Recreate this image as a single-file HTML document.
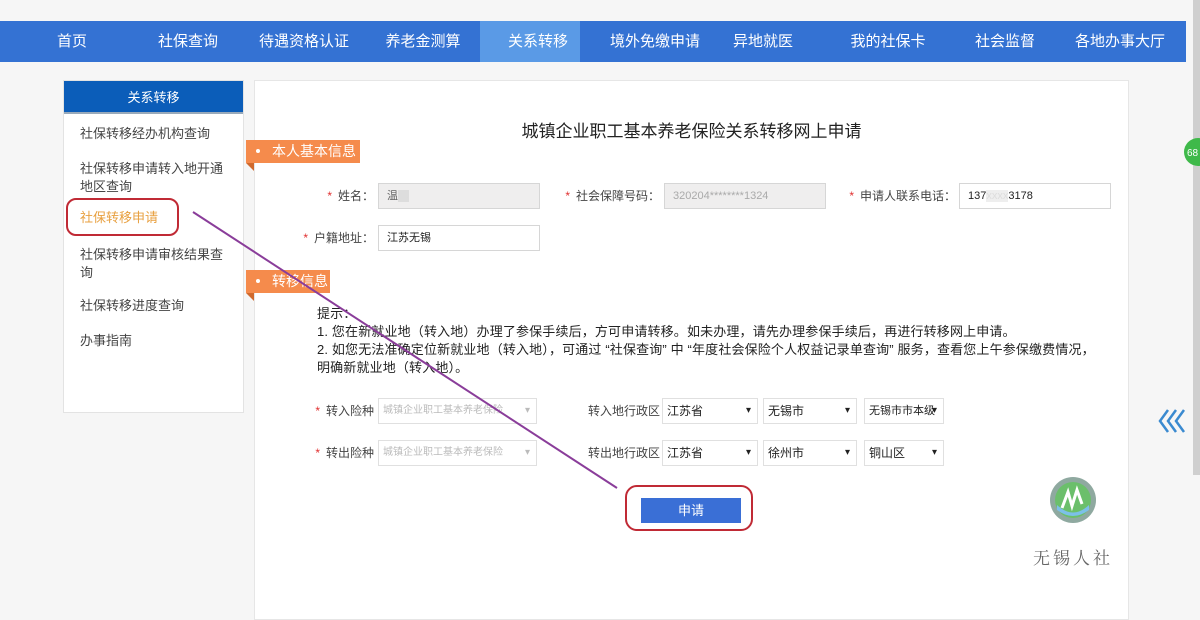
<!DOCTYPE html>
<html><head><meta charset="utf-8"><style>
*{margin:0;padding:0;box-sizing:border-box}
body{width:1200px;height:616px;background:#f6f6f6;position:relative;overflow:hidden;font-family:"Liberation Sans","Noto Sans CJK SC",sans-serif;font-size:12px;color:#333}
.a{position:absolute}
.nav{left:0;top:21px;width:1186px;height:41px;background:#3472d3}
.nav span{position:absolute;top:0;line-height:41px;color:#fff;font-size:15px;text-align:center}
.act{left:480px;width:100px;height:41px;top:0;background:#5a9ae6;position:absolute}
.side{left:63px;top:80px;width:181px;height:333px;background:#fff;border:1px solid #e3e3e3}
.sh{left:0;top:0;width:179px;height:33px;background:#0b5db9;color:#fff;text-align:center;line-height:33px;font-size:13px;border-bottom:2px solid #9ab}
.side div.i{position:absolute;left:16px;font-size:13px;color:#444;line-height:18px;width:155px}
.main{left:254px;top:80px;width:875px;height:540px;background:#fff;border:1px solid #e6e6e6}
.tag{background:#f58b4c;color:#fff;font-size:14px;height:23px;line-height:23px;padding-left:26px}
.tag:before{content:"";position:absolute;left:10px;top:9px;width:4px;height:4px;border-radius:2px;background:#fff}
.tag:after{content:"";position:absolute;left:0;top:23px;border-top:8px solid #d06a2e;border-left:8px solid transparent}
.inp{height:26px;border:1px solid #d6d6d6;background:#fff;line-height:24px;padding-left:8px;font-size:11px;color:#222}
.dis{background:#efeeee;color:#aaa}
.lb{font-size:12px;color:#444;text-align:right;line-height:26px}
.lb b{color:#e03030;font-weight:normal;margin-right:6px}
.sel{height:26px;border:1px solid #e0e0e0;background:#fff;line-height:24px;padding-left:4px;font-size:12px;color:#222}
.sel:after{content:"▾";position:absolute;right:6px;top:0;font-size:10px}
.tip{left:317px;top:305px;font-size:13px;line-height:18px;color:#222;width:790px;letter-spacing:0.15px}
</style></head><body>
<div class="a" style="left:1193px;top:0;width:7px;height:475px;background:#cfcfcf"></div>
<div class="a nav"><div class="act"></div>
<span style="left:40px;width:64px">首页</span>
<span style="left:148px;width:80px">社保查询</span>
<span style="left:246px;width:116px">待遇资格认证</span>
<span style="left:380px;width:86px">养老金测算</span>
<span style="left:495px;width:86px">关系转移</span>
<span style="left:605px;width:100px">境外免缴申请</span>
<span style="left:730px;width:66px">异地就医</span>
<span style="left:840px;width:96px">我的社保卡</span>
<span style="left:965px;width:80px">社会监督</span>
<span style="left:1070px;width:100px">各地办事大厅</span>
</div>
<div class="a side"><div class="a sh">关系转移</div>
<div class="i" style="top:44px">社保转移经办机构查询</div>
<div class="i" style="top:79px">社保转移申请转入地开通地区查询</div>
<div class="i" style="top:128px;color:#e8a040">社保转移申请</div>
<div class="i" style="top:165px">社保转移申请审核结果查询</div>
<div class="i" style="top:216px">社保转移进度查询</div>
<div class="i" style="top:251px">办事指南</div>
</div>
<div class="a" style="left:66px;top:198px;width:113px;height:38px;border:2px solid #c02a35;border-radius:10px"></div>
<div class="a main"></div>
<div class="a" style="left:254px;top:117px;width:875px;text-align:center;font-size:17px;color:#222">城镇企业职工基本养老保险关系转移网上申请</div>
<div class="a tag" style="left:246px;top:140px;width:114px">本人基本信息</div>
<div class="a tag" style="left:246px;top:270px;width:84px">转移信息</div>
<div class="a lb" style="left:300px;top:183px;width:74px"><b>*</b>姓名：</div>
<div class="a inp dis" style="left:378px;top:183px;width:162px;color:#666">温<span style="background:#ddd;color:#ddd">xx</span></div>
<div class="a lb" style="left:550px;top:183px;width:110px"><b>*</b>社会保障号码：</div>
<div class="a inp dis" style="left:664px;top:183px;width:162px">320204********1324</div>
<div class="a lb" style="left:830px;top:183px;width:126px"><b>*</b>申请人联系电话：</div>
<div class="a inp" style="left:959px;top:183px;width:152px">137<span style="color:#ddd;background:#eee">xxxx</span>3178</div>
<div class="a lb" style="left:290px;top:225px;width:84px"><b>*</b>户籍地址：</div>
<div class="a inp" style="left:378px;top:225px;width:162px">江苏无锡</div>
<div class="a tip">提示：<br>1. 您在新就业地（转入地）办理了参保手续后，方可申请转移。如未办理，请先办理参保手续后，再进行转移网上申请。<br>2. 如您无法准确定位新就业地（转入地），可通过 “社保查询” 中 “年度社会保险个人权益记录单查询” 服务，查看您上午参保缴费情况，明确新就业地（转入地）。</div>
<div class="a lb" style="left:300px;top:398px;width:74px"><b>*</b>转入险种</div>
<div class="a sel dis" style="left:378px;top:398px;width:159px;font-size:10px;color:#bbb">城镇企业职工基本养老保险</div>
<div class="a lb" style="left:580px;top:398px;width:80px">转入地行政区</div>
<div class="a sel" style="left:662px;top:398px;width:96px">江苏省</div>
<div class="a sel" style="left:763px;top:398px;width:94px">无锡市</div>
<div class="a sel" style="left:864px;top:398px;width:80px;font-size:11px">无锡市市本级</div>
<div class="a lb" style="left:300px;top:440px;width:74px"><b>*</b>转出险种</div>
<div class="a sel dis" style="left:378px;top:440px;width:159px;font-size:10px;color:#bbb">城镇企业职工基本养老保险</div>
<div class="a lb" style="left:580px;top:440px;width:80px">转出地行政区</div>
<div class="a sel" style="left:662px;top:440px;width:96px">江苏省</div>
<div class="a sel" style="left:763px;top:440px;width:94px">徐州市</div>
<div class="a sel" style="left:864px;top:440px;width:80px">铜山区</div>
<div class="a" style="left:641px;top:498px;width:100px;height:25px;background:#3a6fd6;color:#fff;text-align:center;line-height:25px;font-size:13px">申请</div>
<div class="a" style="left:625px;top:485px;width:128px;height:46px;border:2px solid #c02a35;border-radius:12px"></div>
<svg class="a" style="left:0;top:0" width="1200" height="616"><line x1="193" y1="212" x2="617" y2="488" stroke="#8a3d9a" stroke-width="2"/>
<circle cx="1073" cy="500" r="23" fill="#8fa9a0"/><circle cx="1073" cy="500" r="18" fill="#6bbf6b"/><path d="M1057 505 Q1073 520 1089 505 L1089 510 Q1073 522 1057 510Z" fill="#7cc0e8"/><path d="M1062 508 L1068 492 L1072 506 L1077 490 L1082 504" stroke="#fff" stroke-width="3" fill="none"/>
<path d="M1168 410 L1160 421 L1168 432 M1176 410 L1168 421 L1176 432 M1184 410 L1176 421 L1184 432" stroke="#3a8ad0" stroke-width="2.5" fill="none"/>
<circle cx="1198" cy="152" r="14" fill="#3fb94a"/><text x="1187" y="156" fill="#fff" font-size="10" font-family="Liberation Sans">68</text></svg>
<div class="a" style="left:1033px;top:544px;font-size:17px;color:#666;letter-spacing:3px;font-family:'Noto Serif CJK SC',serif">无锡人社</div>
</body></html>
